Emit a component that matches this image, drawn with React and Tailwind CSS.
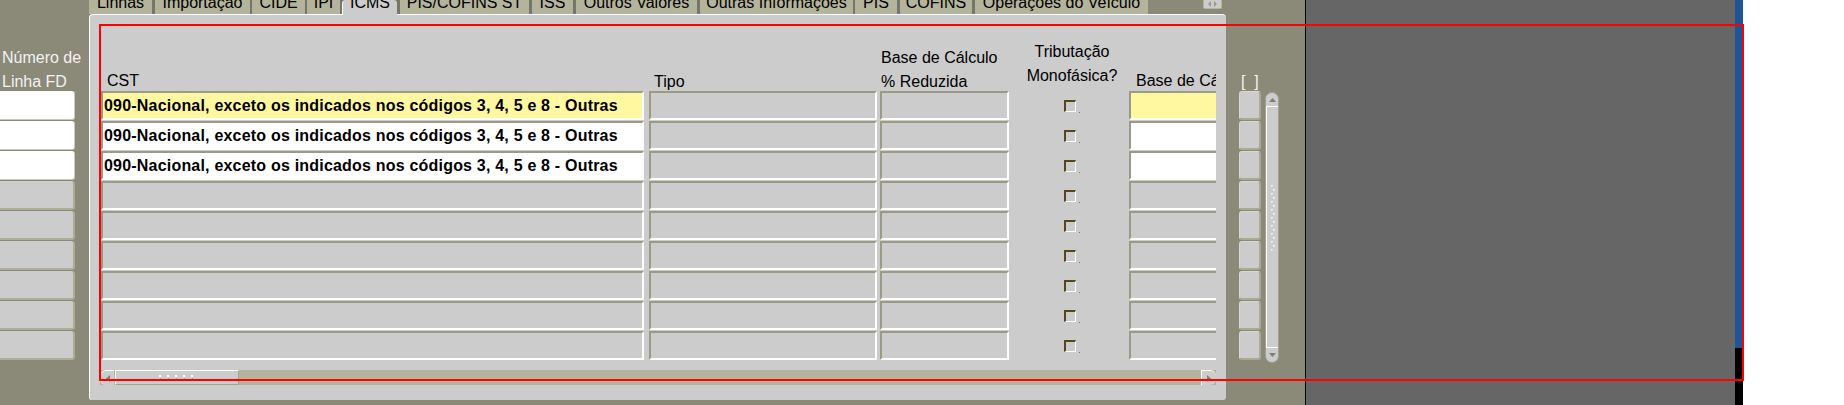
import React from "react";

const CST_TEXT = "090-Nacional, exceto os indicados nos códigos 3, 4, 5 e 8 - Outras";

const cell =
  "h-[29px] shrink-0 border-t-2 border-l-2 border-t-[#9b9a86] border-l-[#9b9a86] border-b-2 border-r-2 border-b-white border-r-white";

function Tab({ label, w, ml, active }) {
  if (active) {
    return (
      <div className={`relative z-10 -mb-px h-[15px] overflow-hidden rounded-tl-[4px] rounded-tr-[3px] border-l border-white bg-[#cccccc] text-center ${w} ${ml}`}>
        <span className="-mt-[4px] block leading-[14px] text-black">{label}</span>
      </div>
    );
  }
  return (
    <div className={`h-[14px] overflow-hidden bg-[#b4b39b] text-center ${w} ${ml}`}>
      <span className="-mt-[4px] block leading-[14px] text-black">{label}</span>
    </div>
  );
}

function Checkbox() {
  return (
    <div className="flex w-[120px] shrink-0 pl-[55px] pt-[9px]">
      <div className="h-[12px] w-[12px] border-t-2 border-l-2 border-t-[#55461b] border-l-[#55461b] border-b border-r border-b-white border-r-white" />
      <div className="ml-[3px] mt-[12px] h-px w-px bg-[#77776a]" />
    </div>
  );
}

function Row({ i }) {
  const filled = i < 3;
  const bg = i === 0 ? "bg-[#fff8a0]" : filled ? "bg-white" : "bg-[#cccccc]";
  return (
    <div className="flex h-[29px]">
      <div className={`${cell} w-[543px] ${bg} truncate pl-px text-[16px] font-bold leading-[25px] tracking-[0.2px] text-black`}>
        {filled ? CST_TEXT : ""}
      </div>
      <div className={`${cell} ml-[5px] w-[228px] bg-[#cccccc]`} />
      <div className={`${cell} ml-[3px] w-[129px] bg-[#cccccc]`} />
      <Checkbox />
      <div className={`${cell} w-[100px] ${bg}`} />
    </div>
  );
}

function LeftField({ i }) {
  return i < 3 ? (
    <div className="h-[29px] w-[75px] rounded-r-[3px] border-r border-b border-[#c9c8ba] bg-white" />
  ) : (
    <div className="h-[29px] w-[75px] rounded-r-[3px] border-r-2 border-b-2 border-[#adac97] bg-[#cccccc]" />
  );
}

function Grip({ vertical }) {
  if (vertical) {
    return (
      <svg width="6" height="66" viewBox="0 0 6 66">
        {Array.from({ length: 17 }).map((_, k) => (
          <rect key={k} x={k % 2 === 0 ? 1 : 3} y={k * 4} width="1.5" height="1.5" fill="#ffffff" />
        ))}
      </svg>
    );
  }
  return (
    <svg width="40" height="5" viewBox="0 0 40 5">
      {Array.from({ length: 5 }).map((_, k) => (
        <g key={k}>
          <rect x={k * 8 + 2} y="0" width="2" height="2" fill="#ffffff" />
          <rect x={k * 8 + 3} y="3" width="1" height="1" fill="#9d9c88" />
        </g>
      ))}
    </svg>
  );
}

export default function App() {
  return (
    <div className="relative flex h-[405px] w-[1844px] overflow-hidden bg-white font-['Liberation_Sans',Arial,sans-serif] text-[16px]">
      {/* form canvas */}
      <div className="flex h-full w-[1305px] shrink-0 bg-[#8b8a78]">
        {/* left record number column */}
        <div className="w-[89px] shrink-0">
          <div className="h-[91px] pl-[2px] pt-[46px] leading-[24px] text-[#f2f2f2]">
            <div className="whitespace-nowrap">Número de</div>
            <div className="whitespace-nowrap">Linha FD</div>
          </div>
          <div className="flex flex-col gap-px">
            {Array.from({ length: 9 }).map((_, i) => (
              <LeftField key={i} i={i} />
            ))}
          </div>
        </div>

        {/* tab canvas */}
        <div className="flex w-[1137px] shrink-0 flex-col">
          <div className="flex h-[14px] items-start">
            <div className="flex h-[14px] w-[1059px] bg-[#77766a]">
              <Tab label="Linhas" w="w-[63px]" ml="ml-0" />
              <Tab label="Importação" w="w-[95px]" ml="ml-[3px]" />
              <Tab label="CIDE" w="w-[53px]" ml="ml-[2px]" />
              <Tab label="IPI" w="w-[33px]" ml="ml-[2px]" />
              <Tab label="ICMS" w="w-[55px]" ml="ml-[2px]" active />
              <Tab label="PIS/COFINS ST" w="w-[129px]" ml="ml-[3px]" />
              <Tab label="ISS" w="w-[41px]" ml="ml-[3px]" />
              <Tab label="Outros Valores" w="w-[121px]" ml="ml-[3px]" />
              <Tab label="Outras Informações" w="w-[153px]" ml="ml-[3px]" />
              <Tab label="PIS" w="w-[42px]" ml="ml-[2px]" />
              <Tab label="COFINS" w="w-[72px]" ml="ml-[3px]" />
              <Tab label="Operações do Veículo" w="w-[173px]" ml="ml-[3px]" />
            </div>
            <div className="ml-[55px] flex h-[9px] w-[19px] items-center justify-center rounded-b-[2px] border border-t-0 border-[#b4b39b] bg-[#cccccc]">
              <svg width="11" height="6" viewBox="0 0 11 6">
                <path d="M4 0 L1 3 L4 6 Z" fill="#9a9a8c" />
                <path d="M7 0 L10 3 L7 6 Z" fill="#9a9a8c" />
              </svg>
            </div>
          </div>

          <div className="h-[386px] rounded-tl-[4px] rounded-tr-[4px] rounded-b-[3px] border-t border-l border-white bg-[#cccccc] pl-[11px]">
            {/* column prompts */}
            <div className="flex h-[76px] w-[1115px] items-end overflow-hidden leading-[24px] text-black">
              <div className="-mb-[2px] w-[548px] shrink-0 pl-[6px]">CST</div>
              <div className="-mb-[3px] w-[231px] shrink-0 pl-[5px]">Tipo</div>
              <div className="-mb-[3px] w-[136px] shrink-0 whitespace-nowrap pl-px">
                <div>Base de Cálculo</div>
                <div>% Reduzida</div>
              </div>
              <div className="mb-[3px] w-[112px] shrink-0 whitespace-nowrap text-center">
                <div>Tributação</div>
                <div>Monofásica?</div>
              </div>
              <div className="-mb-[2px] shrink-0 whitespace-nowrap pl-[8px]">Base de Cálculo</div>
            </div>

            {/* records */}
            <div className="flex w-[1115px] flex-col gap-px overflow-hidden">
              {Array.from({ length: 9 }).map((_, i) => (
                <Row key={i} i={i} />
              ))}
            </div>

            {/* horizontal scrollbar */}
            <div className="-ml-px mt-[10px] flex h-[15px] w-[1116px] bg-[#b4b39b]">
              <div className="flex w-[14px] items-center justify-center rounded-l-[6px] border-t border-l border-white bg-[#cccccc]">
                <svg width="4" height="7" viewBox="0 0 4 7">
                  <path d="M4 0 L0 3.5 L4 7 Z" fill="#7f7f72" />
                </svg>
              </div>
              <div className="ml-px flex w-[124px] items-center justify-center border-t border-l border-white border-r border-b border-r-[#a3a28e] border-b-[#a3a28e] bg-[#cccccc]">
                <Grip />
              </div>
              <div className="ml-auto flex w-[15px] items-center justify-center rounded-r-[6px] border-t border-l border-white bg-[#cccccc]">
                <svg width="4" height="7" viewBox="0 0 4 7">
                  <path d="M0 0 L4 3.5 L0 7 Z" fill="#7f7f72" />
                </svg>
              </div>
            </div>
          </div>
        </div>

        {/* right of canvas: selection column + vertical scrollbar */}
        <div className="w-[79px] shrink-0">
          <div className="flex h-[91px] items-end pl-[15px] leading-[24px] text-[#f2f2f2]">
            <span className="-mb-[3px] whitespace-pre">[  ]</span>
          </div>
          <div className="flex">
            <div className="ml-[13px] flex w-[22px] flex-col gap-px">
              {Array.from({ length: 9 }).map((_, i) => (
                <div key={i} className="h-[29px] rounded-[3px] border-t border-l border-[#d8d8d0] border-r-2 border-b-2 border-r-[#aaa994] border-b-[#aaa994] bg-[#cccccc]" />
              ))}
            </div>
            <div className="ml-[4px] mt-px flex h-[271px] w-[14px] flex-col rounded-[7px] border border-[#a3a28e] bg-[#cccccc]">
              <div className="flex h-[14px] items-center justify-center border-b border-white">
                <svg width="7" height="4" viewBox="0 0 7 4">
                  <path d="M0 4 L3.5 0 L7 4 Z" fill="#7f7f72" />
                </svg>
              </div>
              <div className="flex flex-1 justify-center border-l border-white pt-[78px]">
                <Grip vertical />
              </div>
              <div className="flex h-[15px] items-center justify-center border-t border-white">
                <svg width="7" height="4" viewBox="0 0 7 4">
                  <path d="M0 0 L3.5 4 L7 0 Z" fill="#7f7f72" />
                </svg>
              </div>
            </div>
          </div>
        </div>
      </div>

      <div className="h-full w-px shrink-0 bg-black" />
      <div className="h-full w-[429px] shrink-0 bg-[#666666]" />
      <div className="flex h-full w-[8px] shrink-0 flex-col">
        <div className="h-[348px] bg-[#1f5597]" />
        <div className="flex-1 bg-black" />
      </div>
      <div className="h-full flex-1 bg-white" />

      {/* highlight frame */}
      <div className="pointer-events-none absolute left-[99px] top-[24px] h-[357px] w-[1645px] border-2 border-[#ff0000]" />
    </div>
  );
}
